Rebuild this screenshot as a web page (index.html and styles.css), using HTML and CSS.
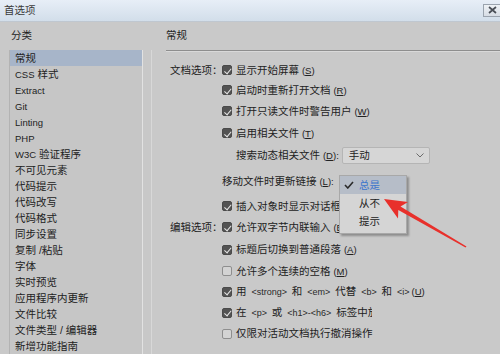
FILE: index.html
```html
<!DOCTYPE html>
<html lang="zh-CN">
<head>
<meta charset="utf-8">
<title>首选项</title>
<link rel="stylesheet" href="styles.css">
</head>
<body>
<div class="window">
  <div class="titlebar">
    <span class="title">首选项</span>
    <span class="close"><svg width="9" height="8" viewBox="0 0 9 8"><path d="M1 1 L8 7 M8 1 L1 7" stroke="#4a4f57" stroke-width="1.7" fill="none"/></svg></span>
  </div>
  <div class="content">
    <aside class="sidebar">
      <div class="side-head">分类</div>
      <div class="listbox">
        <ul class="list">
          <li class="sel">常规</li>
          <li><span class="lat">CSS</span> 样式</li>
          <li><span class="lat">Extract</span></li>
          <li><span class="lat">Git</span></li>
          <li><span class="lat">Linting</span></li>
          <li><span class="lat">PHP</span></li>
          <li><span class="lat">W3C</span> 验证程序</li>
          <li>不可见元素</li>
          <li>代码提示</li>
          <li>代码改写</li>
          <li>代码格式</li>
          <li>同步设置</li>
          <li>复制 /粘贴</li>
          <li>字体</li>
          <li>实时预览</li>
          <li>应用程序内更新</li>
          <li>文件比较</li>
          <li>文件类型 / 编辑器</li>
          <li>新增功能指南</li>
        </ul>
        <div class="scroll"></div>
      </div>
    </aside>
    <main class="panel">
      <div class="panel-head">常规</div>
      <div class="rule"></div>
      <div class="form">
        <div class="lbl">文档选项：</div>
        <div class="opt"><span class="cb on"></span><span class="t">显示开始屏幕 <span class="mn">(<u>S</u>)</span></span></div>
        <div class="opt"><span class="cb on"></span><span class="t">启动时重新打开文档 <span class="mn">(<u>R</u>)</span></span></div>
        <div class="opt"><span class="cb on"></span><span class="t">打开只读文件时警告用户 <span class="mn">(<u>W</u>)</span></span></div>
        <div class="opt"><span class="cb on"></span><span class="t">启用相关文件 <span class="mn">(<u>T</u>)</span></span></div>
        <div class="opt sub"><span class="t">搜索动态相关文件 <span class="mn">(<u>D</u>):</span></span>
          <span class="select"><span>手动</span><svg width="8" height="5" viewBox="0 0 8 5"><path d="M0.5 0.5 L4 4 L7.5 0.5" stroke="#6b6b6b" stroke-width="1" fill="none"/></svg></span>
        </div>
        <div class="opt drop"><span class="t">移动文件时更新链接 <span class="mn">(<u>L</u>):</span></span>
          <div class="popup">
            <div class="item hi"><svg class="tick" width="10" height="8" viewBox="0 0 10 8"><path d="M1 4 L3.8 7 L9 1" stroke="#2b2b2b" stroke-width="1.6" fill="none"/></svg>总是</div>
            <div class="item">从不</div>
            <div class="item">提示</div>
          </div>
        </div>
        <div class="opt"><span class="cb on"></span><span class="t">插入对象时显示对话框 <span class="mn">(<u>I</u>)</span></span></div>
        <div class="lbl">编辑选项：</div>
        <div class="opt"><span class="cb on"></span><span class="t">允许双字节内联输入 <span class="mn">(<u>E</u>)</span></span></div>
        <div class="opt"><span class="cb on"></span><span class="t">标题后切换到普通段落 <span class="mn">(<u>A</u>)</span></span></div>
        <div class="opt"><span class="cb"></span><span class="t">允许多个连续的空格 <span class="mn">(<u>M</u>)</span></span></div>
        <div class="opt"><span class="cb on"></span><span class="t">用 <span class="code">&lt;strong&gt;</span> 和 <span class="code">&lt;em&gt;</span> 代替 <span class="code">&lt;b&gt;</span> 和 <span class="code">&lt;i&gt;</span><span class="mn">(<u>U</u>)</span></span></div>
        <div class="opt"><span class="cb on"></span><span class="t">在 <span class="code">&lt;p&gt;</span> 或 <span class="code">&lt;h1&gt;-&lt;h6&gt;</span> <span class="clip">标签中放置可编辑区域</span></span></div>
        <div class="opt"><span class="cb"></span><span class="t">仅限对活动文档执行撤消操作</span></div>
      </div>
    </main>
  </div>
  <svg class="arrow" width="500" height="354" viewBox="0 0 500 354">
    <polygon points="384,199 408,202 400.5,206.6 466.5,246.4 465.5,247.6 398.3,210 398,218.5" fill="#e8302b"/>
  </svg>
</div>
</body>
</html>
```

FILE: styles.css
```css
* { box-sizing: border-box; margin: 0; padding: 0; }
html, body { width: 500px; height: 354px; overflow: hidden; }
body {
  background: #c9c9c9;
  font-family: "Liberation Sans", "Noto Sans CJK SC", sans-serif;
  font-size: 10.5px;
  color: #222;
  line-height: 1.2;
}
.window { position: relative; width: 500px; height: 354px; display: flex; flex-direction: column; }

.titlebar {
  height: 22px; flex: none; display: flex; align-items: center;
  padding-left: 4px;
  background: linear-gradient(#e7eef7, #d2deea);
  border-bottom: 1px solid #bfc7d0;
}
.title { color: #3a3a3a; }
.close {
  margin-left: auto; margin-right: -3px; margin-top: -1px;
  width: 20px; height: 13px;
  border: 1px solid #9aa3ae;
  background: linear-gradient(#eef2f6, #d7dde5);
  display: flex; align-items: center; padding-left: 4px;
}

.content { flex: 1; display: flex; min-height: 0; }

.sidebar { width: 155px; flex: none; padding-left: 9px; display: flex; flex-direction: column; }
.side-head { height: 28px; padding-left: 2px; padding-bottom: 2px; display: flex; align-items: center; }
.listbox {
  flex: 1; display: flex; width: 143px;
  border-left: 1px solid #b3b3b3;
  background: #c6c6c6;
}
.list { list-style: none; flex: 1; min-width: 0; }
.list li { height: 16px; line-height: 16px; padding-left: 5px; white-space: nowrap; }
.list li.sel { background: #a7b5c9; }
.lat { font-size: 9.5px; }
.scroll { width: 10px; flex: none; border-left: 1px solid #e2e2e2; border-right: 1px solid #d8d8d8; background: #c8c8c8; }

.panel { flex: 1; padding-left: 11px; min-width: 0; }
.panel-head { height: 28px; padding-bottom: 2px; display: flex; align-items: center; }
.rule { height: 2px; border-top: 1px solid #8e8e8e; border-bottom: 1px solid #d9d9d9; }

.form {
  margin-top: 8px; margin-left: 4px;
  display: grid;
  grid-template-columns: 52px auto;
  grid-template-rows: 20px 20px 22px 22px 22px 30px 20px 22px 23px 20px 21px 21px 21px;
}
.lbl { grid-column: 1; display: flex; align-items: center; white-space: nowrap; }
.opt { grid-column: 2; display: flex; align-items: center; white-space: nowrap; }
.opt.sub { padding-left: 14px; }
.opt.drop { position: relative; }
.t { white-space: nowrap; }

.mn { font-size: 9.5px; }
.mn u { text-underline-offset: 1px; }
.code { font-size: 9px; margin: 0 2px; color: #2a2a2a; }
.clip { display: inline-block; width: 36px; overflow: hidden; white-space: nowrap; vertical-align: top; }

.cb {
  position: relative; flex: none;
  width: 10px; height: 10px; margin-right: 4px;
  border: 1px solid #8e8e8e; border-radius: 2px;
  background: #d3d3d3;
}
.cb.on { background: #535353; border-color: #4a4a4a; }
.cb.on::after {
  content: ""; position: absolute; left: 2.5px; top: 0.5px;
  width: 3px; height: 5.5px;
  border-right: 1.5px solid #e8e8e8; border-bottom: 1.5px solid #e8e8e8;
  transform: rotate(40deg);
}

.select {
  margin-left: 3px; width: 88px; height: 17px;
  border: 1px solid #b5b5b5; border-radius: 2px;
  background: #d6d6d6;
  display: flex; align-items: center; justify-content: space-between;
  padding: 0 5px 0 6px;
}

.popup {
  position: absolute; left: 117px; top: 9px;
  width: 68px; padding-bottom: 3px;
  background: #d5d5d5;
  border: 1px solid #a8a8a8;
  box-shadow: 2px 2px 2px rgba(0,0,0,0.3);
}
.item { position: relative; height: 18px; display: flex; align-items: center; padding-left: 19px; }
.item.hi { background: #b6bdc8; color: #3b75cc; }
.tick { position: absolute; left: 4px; top: 5px; }

.arrow { position: absolute; left: 0; top: 0; pointer-events: none; }
```
